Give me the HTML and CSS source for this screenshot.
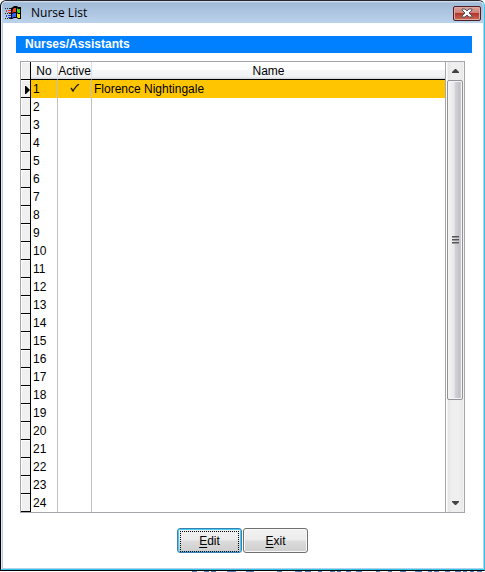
FILE: index.html
```
<!DOCTYPE html>
<html lang="en">
<head>
<meta charset="utf-8">
<title>Nurse List</title>
<link rel="stylesheet" href="styles.css">
</head>
<body>
<main class="window">
  <header class="titlebar">
    <svg class="app-icon" width="16" height="16" viewBox="0 0 16 16" aria-hidden="true">
      <path fill="#000" d="M6 3l2-1 1-1h3l1 1h3v12h-3l-1-1H9l-2 1H6z"/>
      <path fill="#f0482c" d="M8 4l1-1h2v4H9L7 8z"/>
      <path fill="#43d51c" d="M12 3l1 1h2v4h-2l-1-1z"/>
      <path fill="#2d62f0" d="M7 9l2-1h2v4H9l-2 1z"/>
      <path fill="#ffe21a" d="M12 8l1 1h2v4h-2l-1-1z"/>
      <path fill="#222" d="M0 3h1v1H0zM2 3h1v1H2zM4 3h2v1H4zM0 8h1v1H0zM2 8h1v1H2zM4 8h2v1H4zM0 13h1v1H0zM2 13h1v1H2zM4 13h2v1H4z"/>
      <path fill="#e8382c" d="M1 5h1v2H1zM3 5h3v1H3zM3 7h3v1H3z"/>
      <path fill="#2440d0" d="M1 10h1v2H1zM3 10h3v1H3zM3 12h3v1H3z"/>
    </svg>
    <h1 class="title">Nurse List</h1>
    <button class="close" type="button" aria-label="Close">
      <svg width="12" height="10" viewBox="0 0 12 10" aria-hidden="true">
        <path d="M1 1h3l2 2 2-2h3v1L8 5l3 3v1H8L6 7 4 9H1V8l3-3-3-3z" fill="#fff" stroke="#55555f" stroke-width="1"/>
      </svg>
    </button>
  </header>
  <section class="content">
    <h2 class="banner">Nurses/Assistants</h2>
    <div class="grid">
      <table class="nurses">
        <colgroup><col class="c-mark"><col class="c-no"><col class="c-active"><col></colgroup>
        <thead>
          <tr><td class="mark"></td><th>No</th><th>Active</th><th>Name</th></tr>
        </thead>
        <tbody>
          <tr class="selected">
            <td class="mark"><svg width="5" height="9" viewBox="0 0 5 9" aria-hidden="true"><path d="M0 1h1l4 4L1 9H0z"/></svg></td>
            <td>1</td>
            <td class="check"><svg width="10" height="10" viewBox="0 0 10 10" role="img" aria-label="Active"><path d="M1 4l2 3C5 4 6 2 9 0" fill="none" stroke="#222" stroke-width="1.4"/></svg></td>
            <td>Florence Nightingale</td>
          </tr>
          <tr><td class="mark"></td><td>2</td><td></td><td></td></tr>
          <tr><td class="mark"></td><td>3</td><td></td><td></td></tr>
          <tr><td class="mark"></td><td>4</td><td></td><td></td></tr>
          <tr><td class="mark"></td><td>5</td><td></td><td></td></tr>
          <tr><td class="mark"></td><td>6</td><td></td><td></td></tr>
          <tr><td class="mark"></td><td>7</td><td></td><td></td></tr>
          <tr><td class="mark"></td><td>8</td><td></td><td></td></tr>
          <tr><td class="mark"></td><td>9</td><td></td><td></td></tr>
          <tr><td class="mark"></td><td>10</td><td></td><td></td></tr>
          <tr><td class="mark"></td><td>11</td><td></td><td></td></tr>
          <tr><td class="mark"></td><td>12</td><td></td><td></td></tr>
          <tr><td class="mark"></td><td>13</td><td></td><td></td></tr>
          <tr><td class="mark"></td><td>14</td><td></td><td></td></tr>
          <tr><td class="mark"></td><td>15</td><td></td><td></td></tr>
          <tr><td class="mark"></td><td>16</td><td></td><td></td></tr>
          <tr><td class="mark"></td><td>17</td><td></td><td></td></tr>
          <tr><td class="mark"></td><td>18</td><td></td><td></td></tr>
          <tr><td class="mark"></td><td>19</td><td></td><td></td></tr>
          <tr><td class="mark"></td><td>20</td><td></td><td></td></tr>
          <tr><td class="mark"></td><td>21</td><td></td><td></td></tr>
          <tr><td class="mark"></td><td>22</td><td></td><td></td></tr>
          <tr><td class="mark"></td><td>23</td><td></td><td></td></tr>
          <tr><td class="mark"></td><td>24</td><td></td><td></td></tr>
        </tbody>
      </table>
      <div class="scrollbar" aria-hidden="true">
        <div class="arrow"><svg width="7" height="4" viewBox="0 0 7 4"><path d="M3 0h1l3 3v1H0V3z" fill="#444"/></svg></div>
        <div class="track">
          <div class="thumb"><svg width="7" height="8" viewBox="0 0 7 8"><path d="M0 0h7v1H0zM0 3h7v1H0zM0 6h7v1H0z" fill="#555"/><path d="M0 1h7v1H0zM0 4h7v1H0zM0 7h7v1H0z" fill="#999"/></svg></div>
          <div class="rest"></div>
        </div>
        <div class="arrow"><svg width="7" height="4" viewBox="0 0 7 4"><path d="M0 0h7v1L4 4H3L0 1z" fill="#444"/></svg></div>
      </div>
    </div>
    <div class="actions">
      <button class="btn focused" type="button"><span class="label"><u>E</u>dit</span></button>
      <button class="btn" type="button"><span class="label"><u>E</u>xit</span></button>
    </div>
  </section>
</main>
<svg class="backdrop" width="485" height="1" viewBox="0 0 485 1" aria-hidden="true">
  <path fill="#4d83b5" d="M192 0h5v1h-5zM204 0h5v1h-5zM211 0h5v1h-5zM227 0h9v1h-9zM246 0h8v1h-8zM277 0h5v1h-5zM295 0h7v1h-7zM305 0h6v1h-6zM318 0h4v1h-4zM330 0h5v1h-5zM337 0h4v1h-4zM346 0h5v1h-5zM356 0h6v1h-6zM376 0h4v1h-4zM388 0h4v1h-4zM400 0h6v1h-6zM415 0h7v1h-7zM428 0h4v1h-4zM434 0h5v1h-5zM445 0h5v1h-5zM455 0h6v1h-6zM463 0h4v1h-4zM470 0h4v1h-4zM477 0h5v1h-5z"/>
</svg>
</body>
</html>
```
FILE: styles.css
```
* { box-sizing: border-box; }

body {
  margin: 0;
  min-height: 100vh;
  display: flex;
  flex-direction: column;
  background: #fff;
  color: #000;
  font: 12px/16px "Liberation Sans", Arial, sans-serif;
}

.window {
  flex: 1;
  display: flex;
  flex-direction: column;
  border: 1px solid #000;
  border-top-color: #29262b;
  border-right-color: #2cc8ee;
  border-radius: 6px 6px 0 0;
  box-shadow: inset 0 -1px #2cc8ee, inset 1px 1px #dce8f4, inset -1px -2px #b7cfe8, inset 2px 0 #b7cfe8;
}

.titlebar {
  display: flex;
  align-items: center;
  height: 22px;
  margin: 0 1px;
  padding: 0 2px 0 3px;
  border-radius: 5px 5px 0 0;
  background: linear-gradient(#dce8f4 0, #a0bad7 2px, #bbd2eb 100%);
}

.app-icon { margin-top: 2px; }

.title {
  flex: 1;
  margin: 2px 0 0 10px;
  font: 12px/16px "Open Sans", "Noto Sans", sans-serif;
}

.close {
  display: flex;
  align-items: center;
  justify-content: center;
  width: 28px;
  height: 15px;
  margin-top: 2px;
  padding: 0;
  border: 1px solid #4e1c24;
  border-radius: 2px;
  background: linear-gradient(#dda39b 0, #cd8078 45%, #b2362b 50%, #ca6a58 100%);
  box-shadow: inset 0 0 0 1px #e0aaa4;
}

.content {
  flex: 1;
  display: flex;
  flex-direction: column;
  padding: 13px 19px 0;
}

.banner {
  margin: 0 -7px 8px -4px;
  padding: 0 9px 1px;
  background: #0080ff;
  color: #fff;
  font-size: 12px;
  line-height: 16px;
}

.grid {
  display: flex;
  border: 1px solid #a5a5ab;
}

.nurses {
  flex: 1;
  table-layout: fixed;
  width: 0;
  border-collapse: separate;
  border-spacing: 0;
}

.c-mark { width: 10px; }
.c-no { width: 27px; }
.c-active { width: 34px; }

.nurses th,
.nurses td {
  height: 18px;
  padding: 0 2px;
  border-right: 1px solid #c0c0c0;
  font-weight: normal;
  line-height: 17px;
  text-align: left;
  white-space: nowrap;
}

.nurses th:last-child,
.nurses td:last-child { border-right: 0; }

.nurses thead th {
  padding: 1px 0 0;
  border-right-color: #dedfe1;
  border-bottom: 1px solid #000;
  background: linear-gradient(#fff 0, #fff 45%, #f5f6f8 50%, #f0f1f3 88%, #d0d1d4 100%);
  line-height: 16px;
  text-align: center;
}

.nurses .mark {
  padding: 0 0 0 4px;
  border-right-color: #000;
  border-bottom: 1px solid #000;
  background: #f0f0f0;
  box-shadow: inset 1px 1px #fff;
}

.mark svg,
.check svg { display: block; }

.check svg { margin: 0 auto; }

.nurses .selected .mark { padding-top: 2px; }

.selected td:not(.mark) { background: #ffc600; }

.scrollbar {
  display: flex;
  flex-direction: column;
  width: 19px;
  padding: 0 1px;
  border-left: 1px solid #a5a5ab;
  background: linear-gradient(90deg, #fff 1px, #e5e5e5 2px, #efefef 6px, #efefef 13px, #e8e8e8 17px, #fff 18px);
}

.arrow {
  display: flex;
  align-items: center;
  justify-content: center;
  height: 18px;
}

.track {
  flex: 1;
  display: flex;
  flex-direction: column;
}

.thumb {
  flex: 81;
  display: flex;
  align-items: center;
  justify-content: center;
  border: 1px solid #929297;
  border-radius: 2px;
  background: linear-gradient(90deg, #f5f5f6 0, #e8e8ea 45%, #d2d2d7 50%, #c1c1c8 85%, #dcdce0 100%);
  box-shadow: inset 0 0 0 1px #f5f5f5;
}

.rest { flex: 24; }

.actions {
  display: flex;
  justify-content: center;
  gap: 1px;
  margin: 15px 0;
}

.btn {
  width: 65px;
  height: 25px;
  padding: 2px;
  border: 1px solid #707070;
  border-radius: 3px;
  background: linear-gradient(#f3f3f3 0, #ebebeb 48%, #dcdcdc 52%, #cecece 100%);
  box-shadow: inset 0 0 0 1px #f8f8f8;
  color: #000;
  font: 12px/16px "Liberation Sans", Arial, sans-serif;
}

.label {
  display: block;
  padding: 1px 0;
  border: 1px solid transparent;
  line-height: 17px;
}

.label u { text-underline-offset: 2px; }

.focused {
  border-color: #3c7fb1;
  box-shadow: inset 0 0 0 1px #43cdf3;
}

.focused .label { border: 1px dotted #000; }

.backdrop {
  display: block;
  max-width: 100%;
}
```
